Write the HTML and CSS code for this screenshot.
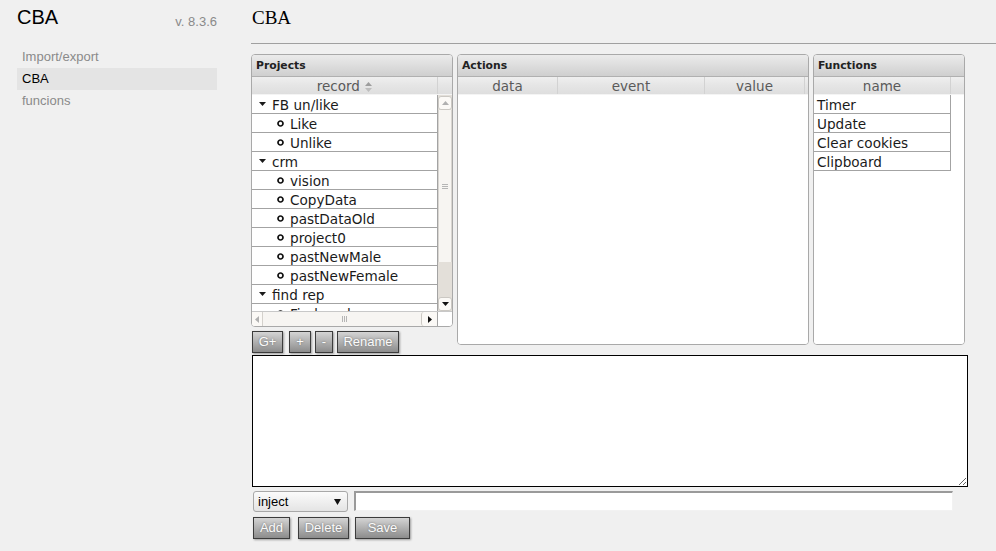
FILE: index.html
```html
<!DOCTYPE html>
<html>
<head>
<meta charset="utf-8">
<title>CBA</title>
<link rel="stylesheet" href="styles.css">
</head>
<body>
<div class="app">
  <aside class="sidebar">
    <div class="brand">
      <span class="brand-name">CBA</span>
      <span class="version">v. 8.3.6</span>
    </div>
    <nav class="nav">
      <div class="nav-item">Import/export</div>
      <div class="nav-item active">CBA</div>
      <div class="nav-item">funcions</div>
    </nav>
  </aside>

  <main class="main">
    <h1 class="page-title">CBA</h1>

    <div class="panels">
      <div class="projects-col">
        <section class="panel projects">
          <div class="panel-head">Projects</div>
          <div class="col-head">
            <div class="col col-record">record <svg class="sort" width="7" height="10" viewBox="0 0 7 10"><path d="M3.5 0L7 4H0Z" fill="#9d9d9d"/><path d="M0 6H7L3.5 10Z" fill="#bdbdbd"/></svg></div>
            <div class="col-spacer"></div>
          </div>
          <div class="tree-body">
            <div class="tree-rows">
              <div class="tree-row parent"><svg class="caret" width="7" height="4" viewBox="0 0 7 4"><path d="M0 0H7L3.5 4Z" fill="#1a1a1a"/></svg>FB un/like</div>
              <div class="tree-row child"><svg class="bullet" width="7" height="7" viewBox="0 0 7 7"><circle cx="3.5" cy="3.5" r="2.5" fill="none" stroke="#111" stroke-width="1.7"/></svg>Like</div>
              <div class="tree-row child"><svg class="bullet" width="7" height="7" viewBox="0 0 7 7"><circle cx="3.5" cy="3.5" r="2.5" fill="none" stroke="#111" stroke-width="1.7"/></svg>Unlike</div>
              <div class="tree-row parent"><svg class="caret" width="7" height="4" viewBox="0 0 7 4"><path d="M0 0H7L3.5 4Z" fill="#1a1a1a"/></svg>crm</div>
              <div class="tree-row child"><svg class="bullet" width="7" height="7" viewBox="0 0 7 7"><circle cx="3.5" cy="3.5" r="2.5" fill="none" stroke="#111" stroke-width="1.7"/></svg>vision</div>
              <div class="tree-row child"><svg class="bullet" width="7" height="7" viewBox="0 0 7 7"><circle cx="3.5" cy="3.5" r="2.5" fill="none" stroke="#111" stroke-width="1.7"/></svg>CopyData</div>
              <div class="tree-row child"><svg class="bullet" width="7" height="7" viewBox="0 0 7 7"><circle cx="3.5" cy="3.5" r="2.5" fill="none" stroke="#111" stroke-width="1.7"/></svg>pastDataOld</div>
              <div class="tree-row child"><svg class="bullet" width="7" height="7" viewBox="0 0 7 7"><circle cx="3.5" cy="3.5" r="2.5" fill="none" stroke="#111" stroke-width="1.7"/></svg>project0</div>
              <div class="tree-row child"><svg class="bullet" width="7" height="7" viewBox="0 0 7 7"><circle cx="3.5" cy="3.5" r="2.5" fill="none" stroke="#111" stroke-width="1.7"/></svg>pastNewMale</div>
              <div class="tree-row child"><svg class="bullet" width="7" height="7" viewBox="0 0 7 7"><circle cx="3.5" cy="3.5" r="2.5" fill="none" stroke="#111" stroke-width="1.7"/></svg>pastNewFemale</div>
              <div class="tree-row parent"><svg class="caret" width="7" height="4" viewBox="0 0 7 4"><path d="M0 0H7L3.5 4Z" fill="#1a1a1a"/></svg>find rep</div>
              <div class="tree-row child"><svg class="bullet" width="7" height="7" viewBox="0 0 7 7"><circle cx="3.5" cy="3.5" r="2.5" fill="none" stroke="#111" stroke-width="1.7"/></svg>Find_replace</div>
            </div>
            <div class="vscroll">
              <div class="sb-btn"><svg width="7" height="4" viewBox="0 0 7 4"><path d="M0 4H7L3.5 0Z" fill="#b0b0b0"/></svg></div>
              <div class="vthumb"><svg width="6" height="5" viewBox="0 0 6 5"><path d="M0 .5H6M0 2.5H6M0 4.5H6" stroke="#b5b5b5" stroke-width="1"/></svg></div>
              <div class="sb-track"></div>
              <div class="sb-btn"><svg width="7" height="4" viewBox="0 0 7 4"><path d="M0 0H7L3.5 4Z" fill="#111"/></svg></div>
            </div>
          </div>
          <div class="hscroll-row">
            <div class="hscroll">
              <div class="sb-hbtn"><svg width="4" height="7" viewBox="0 0 4 7"><path d="M4 0V7L0 3.5Z" fill="#b0b0b0"/></svg></div>
              <div class="hthumb"><svg width="5" height="6" viewBox="0 0 5 6"><path d="M.5 0V6M2.5 0V6M4.5 0V6" stroke="#b5b5b5" stroke-width="1"/></svg></div>
              <div class="sb-hbtn right"><svg width="4" height="7" viewBox="0 0 4 7"><path d="M0 0V7L4 3.5Z" fill="#111"/></svg></div>
            </div>
            <div class="sb-corner"></div>
          </div>
        </section>
        <div class="tool-buttons">
          <button class="btn btn-gplus">G+</button>
          <button class="btn btn-plus">+</button>
          <button class="btn btn-minus">-</button>
          <button class="btn btn-rename">Rename</button>
        </div>
      </div>

      <section class="panel actions">
        <div class="panel-head">Actions</div>
        <div class="col-head">
          <div class="col col-data">data</div>
          <div class="col col-event">event</div>
          <div class="col col-value">value</div>
          <div class="col-spacer"></div>
        </div>
        <div class="grid-body"></div>
      </section>

      <section class="panel functions">
        <div class="panel-head">Functions</div>
        <div class="col-head">
          <div class="col col-name">name</div>
          <div class="col-spacer"></div>
        </div>
        <div class="grid-body">
          <div class="fn-row">Timer</div>
          <div class="fn-row">Update</div>
          <div class="fn-row">Clear cookies</div>
          <div class="fn-row">Clipboard</div>
        </div>
      </section>
    </div>

    <textarea class="editor"></textarea>

    <div class="inject-row">
      <div class="select"><span>inject</span><svg width="7" height="6" viewBox="0 0 7 6"><path d="M0 0H7L3.5 6Z" fill="#111"/></svg></div>
      <input class="text-input" type="text">
    </div>

    <div class="bottom-buttons">
      <button class="btn btn-add">Add</button>
      <button class="btn btn-delete">Delete</button>
      <button class="btn btn-save">Save</button>
    </div>
  </main>
</div>
</body>
</html>
```

FILE: styles.css
```css
html, body {
  margin: 0;
  padding: 0;
}

body {
  background: #f0f0f0;
  font-family: "Liberation Sans", Arial, sans-serif;
  color: #000;
}

.app {
  display: flex;
  min-height: 551px;
}

/* Sidebar */
.sidebar {
  flex: none;
  width: 200px;
  padding-left: 17px;
}

.brand {
  display: flex;
  justify-content: space-between;
  align-items: flex-start;
  height: 46px;
}

.brand-name {
  font-size: 20px;
  line-height: 24px;
  padding-top: 5px;
  color: #000;
}

.version {
  font-size: 13px;
  line-height: 16px;
  padding-top: 14px;
  color: #8a8a8a;
}

.nav-item {
  height: 22px;
  line-height: 22px;
  padding-left: 5px;
  font-size: 13px;
  color: #8a8a8a;
}

.nav-item.active {
  background: #e4e4e4;
  color: #000;
}

/* Main */
.main {
  flex: 1;
  margin-left: 34px;
}

.page-title {
  margin: 0;
  padding: 7px 0 14px 1px;
  font: normal 19px/22px "Liberation Serif", "Times New Roman", serif;
  color: #000;
  border-bottom: 1px solid #a0a0a0;
}

.panels {
  display: flex;
  align-items: flex-start;
  margin-top: 10px;
}

.projects-col {
  flex: none;
  width: 202px;
  margin-right: 4px;
}

.panel {
  box-sizing: border-box;
  border: 1px solid #a9a9a9;
  border-radius: 4px;
  background: #fff;
  overflow: hidden;
  display: flex;
  flex-direction: column;
  font-family: "DejaVu Sans", Verdana, sans-serif;
}

.projects {
  height: 273px;
}

.actions {
  flex: none;
  width: 352px;
  height: 291px;
  margin-right: 4px;
}

.functions {
  flex: none;
  width: 152px;
  height: 291px;
}

.panel-head {
  flex: none;
  box-sizing: border-box;
  height: 22px;
  padding-left: 4px;
  border-bottom: 1px solid #b0b0b0;
  background: linear-gradient(#ebebeb, #cfcfcf);
  font: bold 10.8px/21px "DejaVu Sans", Verdana, sans-serif;
  color: #222;
}

.col-head {
  flex: none;
  display: flex;
  height: 18px;
  background: linear-gradient(#efefef 0%, #e6e6e6 45%, #dedede 100%);
  border-bottom: 1px solid #f4f4f4;
  box-sizing: border-box;
  font-size: 13.5px;
  line-height: 18px;
  color: #5a5a5a;
}

.col {
  flex: none;
  box-sizing: border-box;
  text-align: center;
  border-right: 1px solid #d2d2d2;
  white-space: nowrap;
}

.col-spacer {
  flex: 1;
}

.col-record { width: 186px; }
.col-data { width: 100px; }
.col-event { width: 147px; }
.col-value { width: 100px; }
.col-name { width: 137px; }

.sort {
  vertical-align: -1px;
  margin-left: 1px;
}

/* Tree */
.tree-body {
  flex: none;
  display: flex;
  height: 216px;
  overflow: hidden;
}

.tree-rows {
  flex: none;
  width: 186px;
  box-sizing: border-box;
  border-right: 1px solid #a3a3a3;
}

.tree-row {
  display: flex;
  align-items: flex-start;
  box-sizing: border-box;
  height: 19px;
  border-bottom: 1px solid #a3a3a3;
  font-size: 13.6px;
  line-height: 20px;
  color: #1a1a1a;
  white-space: nowrap;
  overflow: hidden;
}

.tree-row.parent {
  padding-left: 7px;
}

.tree-row.child {
  padding-left: 25px;
}

.caret {
  flex: none;
  margin-top: 7px;
  margin-right: 6px;
}

.bullet {
  flex: none;
  margin-top: 6px;
  margin-right: 6px;
}

/* Scrollbars */
.vscroll {
  flex: none;
  width: 14px;
  display: flex;
  flex-direction: column;
  background: #e3dfd9;
}

.sb-btn {
  flex: none;
  box-sizing: border-box;
  height: 14px;
  background: #fbf9f6;
  border: 1px solid #cbc8c3;
  border-radius: 3px;
  display: flex;
  align-items: center;
  justify-content: center;
}

.sb-btn:first-child {
  margin-top: 1px;
}

.vthumb {
  flex: none;
  box-sizing: border-box;
  height: 152px;
  background: #f7f5f2;
  border-left: 1px solid #d8d5d0;
  border-right: 1px solid #d8d5d0;
  display: flex;
  align-items: center;
  justify-content: center;
}

.sb-track {
  flex: 1;
}

.hscroll-row {
  flex: none;
  display: flex;
  height: 15px;
  border-top: 1px solid #c8c8c8;
  box-sizing: border-box;
}

.hscroll {
  flex: none;
  width: 186px;
  display: flex;
  background: #f7f5f2;
  border-right: 1px solid #a3a3a3;
  box-sizing: border-box;
}

.sb-hbtn {
  flex: none;
  width: 10px;
  display: flex;
  align-items: center;
  justify-content: center;
  background: #fbf9f6;
  border-right: 1px solid #d4d1cc;
}

.sb-hbtn.right {
  width: 15px;
  border-right: none;
  border-left: 1px solid #cbc8c3;
  border-radius: 3px;
}

.hthumb {
  flex: 1;
  display: flex;
  align-items: center;
  justify-content: center;
  padding-left: 4px;
}

.sb-corner {
  flex: 1;
  background: #fff;
}

/* Grid bodies */
.grid-body {
  flex: 1;
  background: #fff;
}

.fn-row {
  box-sizing: border-box;
  width: 137px;
  height: 19px;
  padding-left: 3px;
  border-right: 1px solid #a3a3a3;
  border-bottom: 1px solid #a3a3a3;
  font-size: 13.6px;
  line-height: 20px;
  color: #1a1a1a;
  white-space: nowrap;
  overflow: hidden;
}

/* Buttons */
.btn {
  box-sizing: border-box;
  height: 22px;
  padding: 0;
  border: 1px solid #3c3c3c;
  background: linear-gradient(#d4d4d4, #8c8c8c);
  box-shadow: 1px 1px 2px rgba(0, 0, 0, 0.35);
  font: 13px/20px "Liberation Sans", Arial, sans-serif;
  color: #fbfbfb;
  text-shadow: 0 0 2px #6a6a6a;
  text-align: center;
  cursor: pointer;
}

.tool-buttons {
  display: flex;
  margin-top: 4px;
  padding-left: 1px;
}

.btn-gplus { width: 31px; margin-right: 6px; }
.btn-plus { width: 22px; margin-right: 4px; }
.btn-minus { width: 18px; margin-right: 4px; }
.btn-rename { width: 62px; }

.editor {
  display: block;
  box-sizing: border-box;
  width: 716px;
  height: 132px;
  margin: 2px 0 0 1px;
  padding: 2px;
  border: 1px solid #000;
  background: #fff;
  resize: both;
  outline: none;
}

.inject-row {
  display: flex;
  align-items: flex-start;
  margin-top: 4px;
  padding-left: 2px;
}

.select {
  box-sizing: border-box;
  width: 95px;
  height: 21px;
  margin-right: 6px;
  padding: 0 6px 0 4px;
  border: 1px solid #a8a8a8;
  border-radius: 3px;
  background: linear-gradient(#fbfbfb, #e4e4e4);
  display: flex;
  align-items: center;
  justify-content: space-between;
  font-size: 13px;
  color: #000;
}

.text-input {
  box-sizing: border-box;
  width: 599px;
  height: 20px;
  margin: 0;
  padding: 0 2px;
  border-top: 2px solid #9a9a9a;
  border-left: 2px solid #9a9a9a;
  border-right: 1px solid #f2f2f2;
  border-bottom: 1px solid #f2f2f2;
  background: #fff;
  outline: none;
  font: 13px "Liberation Sans", Arial, sans-serif;
}

.bottom-buttons {
  display: flex;
  margin-top: 5px;
  padding-left: 2px;
}

.btn-add { width: 37px; margin-right: 8px; }
.btn-delete { width: 51px; margin-right: 6px; }
.btn-save { width: 55px; }
```
